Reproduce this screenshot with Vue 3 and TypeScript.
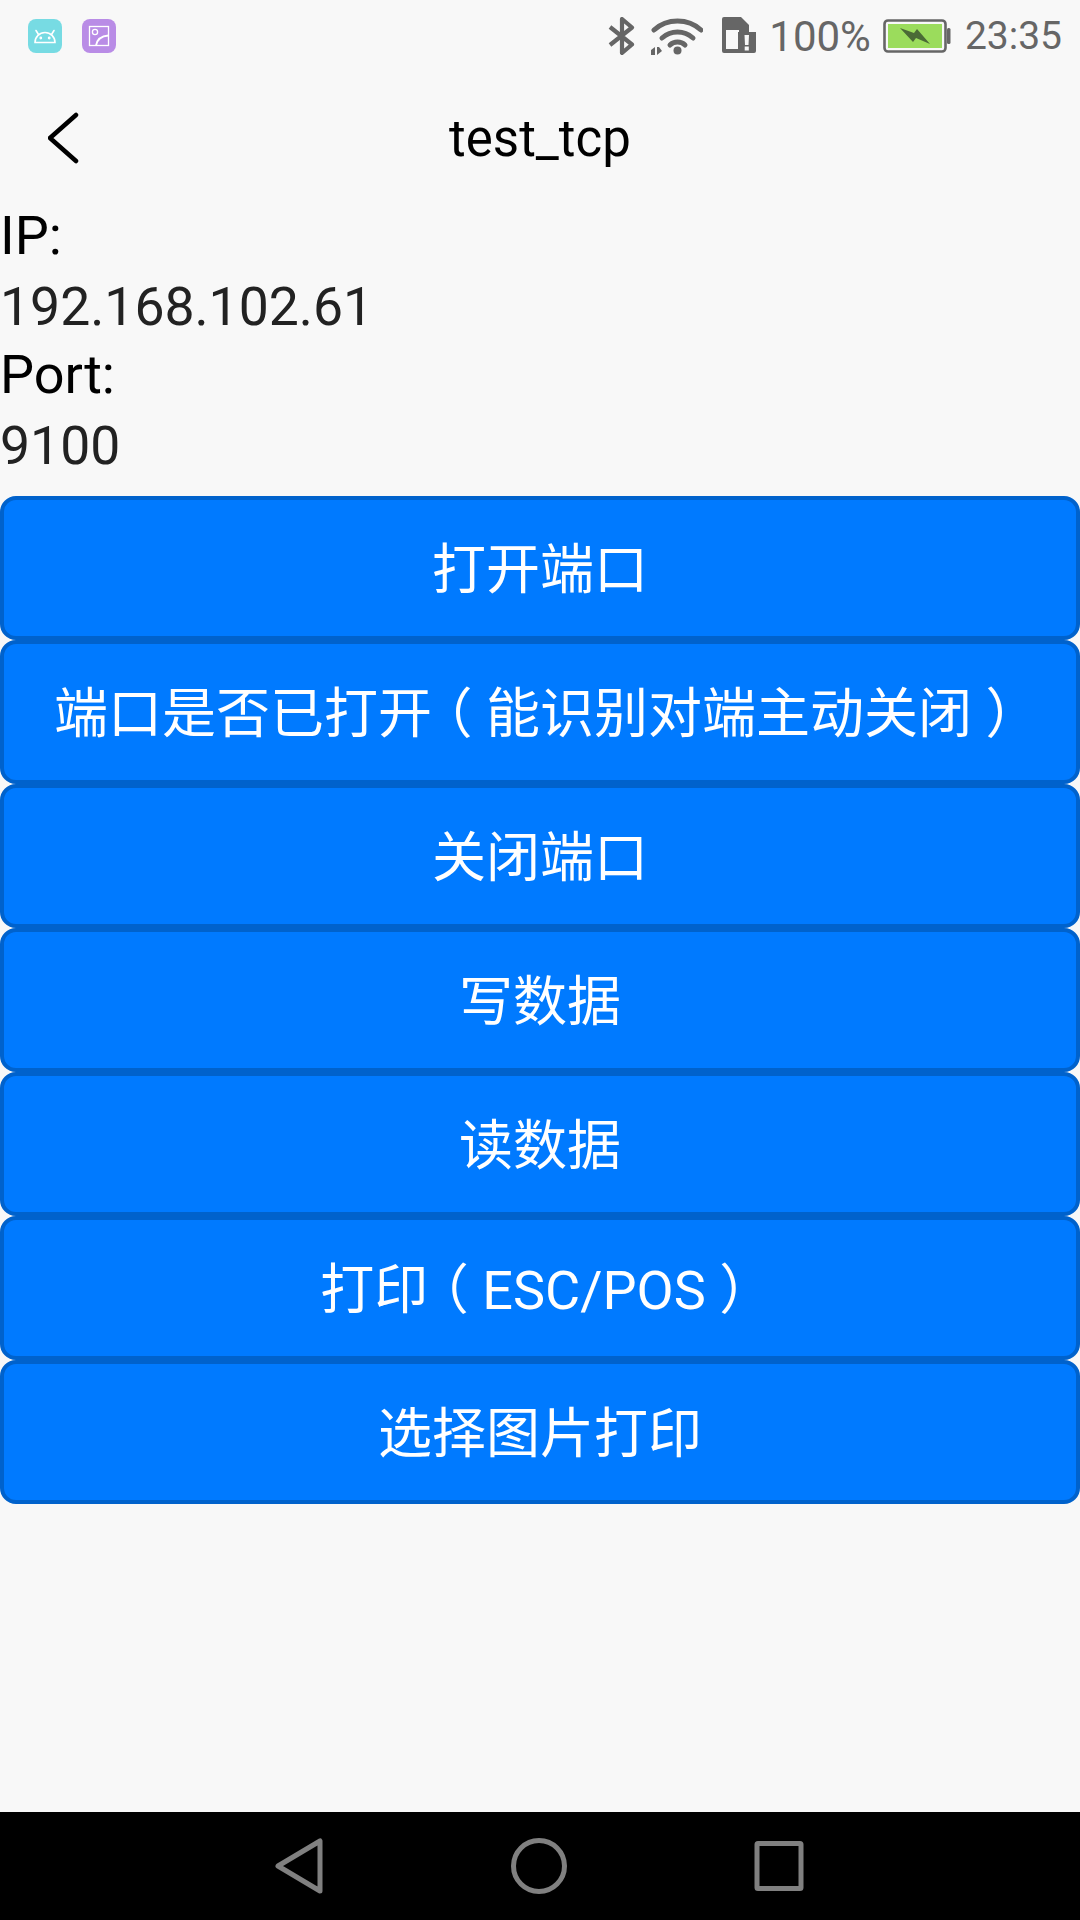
<script setup lang="ts">
const buttons: string[] = [
  '打开端口',
  '端口是否已打开（能识别对端主动关闭）',
  '关闭端口',
  '写数据',
  '读数据',
  '打印（ESC/POS）',
  '选择图片打印',
];

// the screenshot's full-width brackets sit centred in their cell
function splitLabel(label: string): string[] {
  return label.split(/([（）])/).filter(Boolean);
}

function isBracket(part: string): boolean {
  return part === '（' || part === '）';
}
</script>

<template>
  <div class="screen">
    <header class="status-bar">
      <div class="status-bar__apps">
        <span class="app-icon app-icon--android">
          <svg width="34" height="34" viewBox="0 0 34 34" fill="none" stroke="#fff" stroke-width="1.6" stroke-linecap="round">
            <path d="M7 23.5h20c0-5.5-4.5-10-10-10s-10 4.500-10 10z" />
            <path d="M10.500 15.500l-2.500-4M23.500 15.500l2.500-4" />
            <circle cx="12.800" cy="19" r="0.600" fill="#fff" />
            <circle cx="21.200" cy="19" r="0.600" fill="#fff" />
          </svg>
        </span>
        <span class="app-icon app-icon--gallery">
          <svg width="34" height="34" viewBox="0 0 34 34" fill="none" stroke="#fff" stroke-width="1.300">
            <rect x="7.500" y="7.500" width="19" height="19" />
            <circle cx="13" cy="13" r="2.600" />
            <path d="M14 26.500c1-6 6-9.500 12.500-10" stroke-width="1.800" />
          </svg>
        </span>
      </div>
      <div class="status-bar__right">
        <svg class="icon-bt" width="28" height="38" viewBox="0 0 28 38" fill="none" stroke="#666" stroke-width="4.200" stroke-linejoin="round">
          <path d="M2 10l22 17.500-10 8.500V2l10 8.500-22 17.500" />
        </svg>
        <svg class="icon-wifi" width="52" height="38" viewBox="0 0 52 38" fill="none" stroke="#666" stroke-linecap="round">
          <path d="M3 13C16 1 37 1 50 13" stroke-width="5" />
          <path d="M11 21c9-8 22-8 31 0" stroke-width="5" />
          <path d="M19 28c4-4 11-4 15 0" stroke-width="5" />
          <circle cx="26.500" cy="33.500" r="4" fill="#666" stroke="none" />
          <path d="M0 33l4-3v8H0zM6 30h2l3 4-5 4z" fill="#666" stroke="none" />
        </svg>
        <svg class="icon-sim" width="34" height="38" viewBox="0 0 34 38" fill="#666">
          <path d="M2 0h17l8 8v7h-8v21H2a2 2 0 0 1-2-2V2a2 2 0 0 1 2-2z" />
          <path d="M4 13h13v19H4z" fill="#f8f8f8" />
          <path d="M16 15h18v19a2 2 0 0 1-2 2H16z" />
          <path d="M22.500 18h4.500l-.500 10h-3.500zM22.700 29.500h4.100v4h-4.100z" fill="#f8f8f8" />
        </svg>
        <span class="status-bar__percent">100%</span>
        <svg class="icon-battery" width="68" height="34" viewBox="0 0 68 34">
          <rect x="1.500" y="1.500" width="61" height="31" rx="3.500" fill="none" stroke="#666" stroke-width="2.600" />
          <rect x="5" y="5" width="54" height="24" fill="#9bdc5c" />
          <rect x="64" y="9" width="3.500" height="16" rx="1.500" fill="#666" />
          <path d="M17 9l14 5 3-4 13 15-14-6-3 4z" fill="#4a6a36" />
        </svg>
        <span class="status-bar__time">23:35</span>
      </div>
    </header>

    <nav class="nav-bar">
      <span class="nav-bar__back">
        <svg width="32" height="54" viewBox="0 0 32 54" fill="none" stroke="#000" stroke-width="4.500" stroke-linecap="round" stroke-linejoin="round">
          <path d="M28 4L2 27l26 23" />
        </svg>
      </span>
      <h1 class="nav-bar__title">test_tcp</h1>
      <span></span>
    </nav>

    <main class="content">
      <div class="field">
        <span class="field__label">IP:</span>
        <span class="field__value">192.168.102.61</span>
      </div>
      <div class="field">
        <span class="field__label">Port:</span>
        <span class="field__value">9100</span>
      </div>
      <div class="actions">
        <button v-for="label in buttons" :key="label" class="btn" type="button">
          <span
            v-for="(part, i) in splitLabel(label)"
            :key="i"
            :class="{ btn__bracket: isBracket(part) }"
          >{{ part }}</span>
        </button>
      </div>
    </main>

    <footer class="system-nav">
      <svg class="system-nav__back" width="52" height="58" viewBox="0 0 52 58" fill="none" stroke="#808080" stroke-width="5" stroke-linejoin="round">
        <path d="M46 4v50L4 29z" />
      </svg>
      <svg class="system-nav__home" width="56" height="56" viewBox="0 0 56 56" fill="none" stroke="#808080" stroke-width="5">
        <circle cx="28" cy="28" r="25.500" />
      </svg>
      <svg class="system-nav__recent" width="50" height="50" viewBox="0 0 50 50" fill="none" stroke="#808080" stroke-width="5" stroke-linejoin="round">
        <rect x="3" y="2.500" width="44" height="45" rx="1" />
      </svg>
    </footer>
  </div>
</template>

<style scoped>
.screen {
  width: 1080px;
  height: 1920px;
  display: flex;
  flex-direction: column;
  background: #f8f8f8;
  font-family: Roboto, "Noto Sans CJK SC", sans-serif;
  overflow: hidden;
}

.status-bar {
  height: 72px;
  display: flex;
  justify-content: space-between;
  align-items: center;
  padding: 0 18px 0 28px;
  box-sizing: border-box;
}

.status-bar__apps {
  display: flex;
  gap: 20px;
}

.app-icon {
  width: 34px;
  height: 34px;
  border-radius: 8px;
  display: block;
}

.app-icon svg {
  display: block;
}

.app-icon--android {
  background: #77dbe3;
}

.app-icon--gallery {
  background: #b98ce6;
}

.status-bar__right {
  display: flex;
  align-items: center;
  color: #666;
  font-size: 39px;
}

.status-bar__right svg {
  display: block;
}

.icon-wifi {
  margin-left: 15px;
}

.icon-sim {
  margin-left: 19px;
}

.status-bar__percent {
  margin-left: 13px;
  font-size: 42px;
}

.icon-battery {
  margin-left: 12px;
}

.status-bar__time {
  margin-left: 14px;
}

.nav-bar {
  height: 128px;
  padding-top: 5px;
  box-sizing: border-box;
  display: grid;
  grid-template-columns: 1fr auto 1fr;
  align-items: center;
}

.nav-bar__back {
  padding-left: 48px;
  margin-bottom: 1px;
  display: block;
}

.nav-bar__back svg {
  display: block;
}

.nav-bar__title {
  margin: 0;
  font-size: 51px;
  font-weight: 400;
  color: #000;
}

.content {
  flex: 1;
  padding-top: 4px;
}

.field {
  display: flex;
  flex-direction: column;
}

.field__label {
  font-size: 54px;
  line-height: 63px;
  color: #000;
}

.field__value {
  font-size: 53.500px;
  line-height: 72px;
  padding-top: 4px;
  color: #222;
}

.actions {
  display: flex;
  flex-direction: column;
  margin-top: 14px;
}

.btn {
  height: 144px;
  border: 4px solid #0062cc;
  border-radius: 16px;
  background: #007aff;
  color: #fff;
  font-family: inherit;
  font-size: 54px;
  padding: 0 0 6px;
}

.btn__bracket {
  display: inline-block;
  width: 1em;
  text-align: center;
  font-feature-settings: "halt";
}

.system-nav {
  height: 108px;
  background: #000;
  display: flex;
  align-items: center;
  padding-left: 274px;
}

.system-nav__home {
  margin-left: 185px;
}

.system-nav__recent {
  margin-left: 187px;
}
</style>

<style>
html,
body {
  margin: 0;
  background: #f8f8f8;
}
</style>
